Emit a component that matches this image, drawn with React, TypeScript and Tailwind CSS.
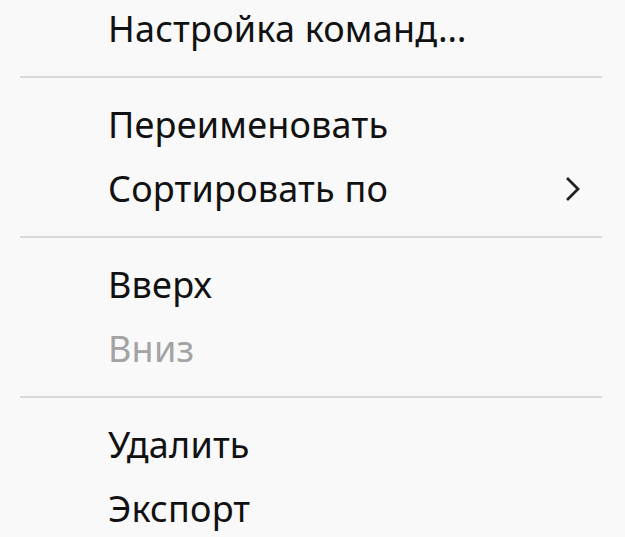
type Item = { label: string; disabled?: boolean; submenu?: boolean } | "sep";

const items: Item[] = [
  { label: "Настройка команд…" },
  "sep",
  { label: "Переименовать" },
  { label: "Сортировать по", submenu: true },
  "sep",
  { label: "Вверх" },
  { label: "Вниз", disabled: true },
  "sep",
  { label: "Удалить" },
  { label: "Экспорт" },
];

function Chevron() {
  return (
    <svg width="16" height="26" viewBox="0 0 16 26" className="text-[#222]">
      <polyline
        points="3,3 13,13 3,23"
        fill="none"
        stroke="currentColor"
        strokeWidth="2.8"
        strokeLinecap="square"
      />
    </svg>
  );
}

export default function App() {
  return (
    <div
      className="w-[625px] h-[537px] overflow-hidden bg-[#f9f9f9]"
      style={{ fontFamily: '"Noto Sans", "Open Sans", sans-serif' }}
    >
      <div className="-mt-[3px] flex flex-col">
        {items.map((it, i) =>
          it === "sep" ? (
            <div key={i} className="h-8 flex items-center pl-5 pr-[23px]">
              <div className="h-[2px] w-full bg-[#d9d9d9]" />
            </div>
          ) : (
            <div
              key={i}
              className={
                "h-16 flex items-center pl-[108px] pr-[44px] text-[36px] tracking-[0.2px] " +
                (it.disabled ? "text-[#a3a3a3]" : "text-[#111]")
              }
            >
              <span className="flex-1 whitespace-nowrap">{it.label}</span>
              {it.submenu && <Chevron />}
            </div>
          )
        )}
      </div>
    </div>
  );
}
